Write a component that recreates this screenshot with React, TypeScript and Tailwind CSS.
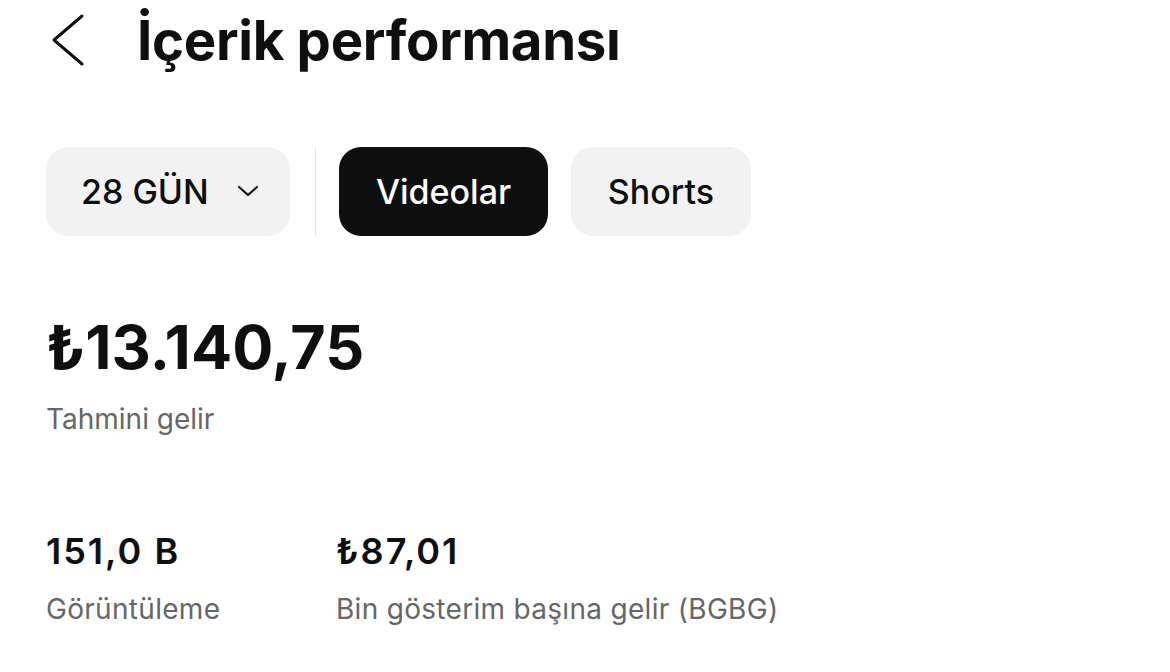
import React from 'react'

function BackIcon() {
  return (
    <svg width="36" height="52" viewBox="0 0 36 52" fill="none">
      <path d="M32 2L4 26L32 50" stroke="#111" strokeWidth="3" strokeLinecap="round" strokeLinejoin="round" />
    </svg>
  )
}

function ChevronDown() {
  return (
    <svg width="22" height="14" viewBox="0 0 22 14" fill="none">
      <path d="M2 3L11 11L20 3" stroke="#111" strokeWidth="2.2" strokeLinecap="round" strokeLinejoin="round" />
    </svg>
  )
}

function Stat({ value, label, big }: { value: string; label: string; big?: boolean }) {
  return (
    <div className="flex flex-col">
      <div
        className={
          big
            ? 'text-[61px] font-bold leading-[70px] text-[#0f0f0f]'
            : 'text-[36px] font-semibold tracking-[2px] leading-[42px] text-[#0f0f0f]'
        }
      >
        {value}
      </div>
      <div className={big ? 'mt-[20px] text-[28px] leading-[34px] text-[#666]' : 'mt-[20px] text-[28px] tracking-[0.3px] leading-[34px] text-[#666]'}>
        {label}
      </div>
    </div>
  )
}

export default function App() {
  return (
    <main className="w-[1170px] h-[672px] bg-white overflow-hidden font-['Inter',sans-serif] pl-[46px]">
      {/* Header */}
      <div className="flex items-center h-[80px]">
        <div className="ml-[4px] w-[87px]">
          <BackIcon />
        </div>
        <h1 className="text-[54.5px] font-bold tracking-[-0.3px] text-[#0f0f0f] leading-none">İçerik performansı</h1>
      </div>

      {/* Filters */}
      <div className="flex items-center mt-[66px] h-[90px]">
        <button className="h-[89px] w-[244px] rounded-[22px] bg-[#f2f2f2] flex items-center pl-[35px] gap-[28px]">
          <span className="text-[34px] font-medium text-[#0f0f0f]">28 GÜN</span>
          <ChevronDown />
        </button>
        <div className="w-px h-[89px] bg-[#e5e5e5] ml-[25px] mr-[23px]" />
        <button className="h-[89px] w-[209px] rounded-[22px] bg-[#0f0f0f] text-white text-[34px] font-medium">Videolar</button>
        <button className="h-[89px] w-[180px] ml-[23px] rounded-[22px] bg-[#f2f2f2] text-[#0f0f0f] text-[34px] font-medium">Shorts</button>
      </div>

      {/* Revenue */}
      <div className="mt-[76px]">
        <Stat big value="₺13.140,75" label="Tahmini gelir" />
      </div>

      {/* Small stats */}
      <div className="flex mt-[94px]">
        <div className="w-[290px]">
          <Stat value="151,0 B" label="Görüntüleme" />
        </div>
        <Stat value="₺87,01" label="Bin gösterim başına gelir (BGBG)" />
      </div>
    </main>
  )
}
